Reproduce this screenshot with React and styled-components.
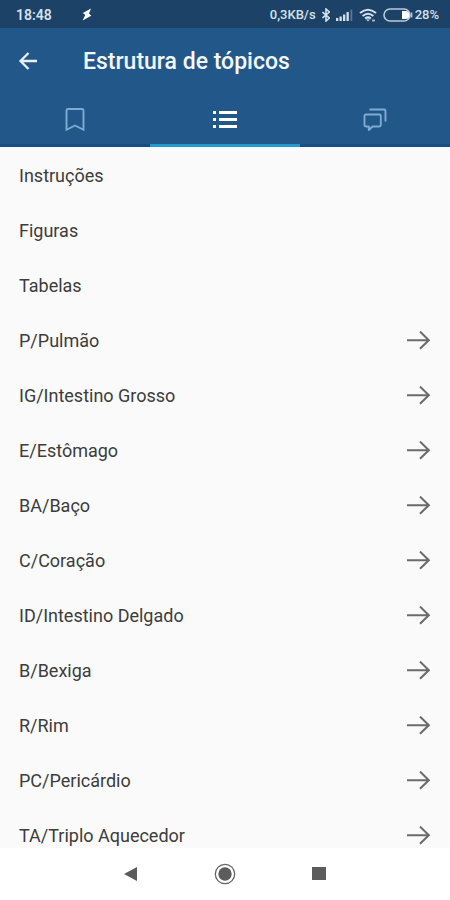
import styled, { createGlobalStyle } from "styled-components";

const topics = [
    { name: "Instruções" },
    { name: "Figuras" },
    { name: "Tabelas" },
    { name: "P/Pulmão", nested: true },
    { name: "IG/Intestino Grosso", nested: true },
    { name: "E/Estômago", nested: true },
    { name: "BA/Baço", nested: true },
    { name: "C/Coração", nested: true },
    { name: "ID/Intestino Delgado", nested: true },
    { name: "B/Bexiga", nested: true },
    { name: "R/Rim", nested: true },
    { name: "PC/Pericárdio", nested: true },
    { name: "TA/Triplo Aquecedor", nested: true },
];

function App() {
    return (
        <Page>
            <GlobalStyle />
            <StatusBar>
                <Clock>18:48</Clock>
                <BoltIcon />
                <StatusRight>
                    <span>0,3KB/s</span>
                    <BluetoothIcon />
                    <SignalIcon />
                    <WifiIcon />
                    <Battery>
                        <BatteryIcon />
                        <span>28%</span>
                    </Battery>
                </StatusRight>
            </StatusBar>

            <Header>
                <TitleBar>
                    <IconButton aria-label="Voltar">
                        <BackIcon />
                    </IconButton>
                    <Title>Estrutura de tópicos</Title>
                </TitleBar>
                <Tabs role="tablist">
                    <Tab role="tab" aria-label="Favoritos" aria-selected="false">
                        <BookmarkIcon />
                    </Tab>
                    <Tab role="tab" aria-label="Tópicos" aria-selected="true" $active>
                        <ListIcon />
                    </Tab>
                    <Tab role="tab" aria-label="Comentários" aria-selected="false">
                        <CommentsIcon />
                    </Tab>
                </Tabs>
            </Header>

            <TopicList>
                {topics.map((topic) => (
                    <li key={topic.name}>
                        <TopicButton>
                            <span>{topic.name}</span>
                            {topic.nested && <ArrowIcon />}
                        </TopicButton>
                    </li>
                ))}
            </TopicList>

            <NavBar>
                <IconButton aria-label="Anterior">
                    <svg width="22" height="22" viewBox="0 0 22 22">
                        <path d="M4 11 17 4V18Z" fill="#5c5c5c" />
                    </svg>
                </IconButton>
                <IconButton aria-label="Início">
                    <svg width="22" height="22" viewBox="0 0 22 22">
                        <circle cx="11" cy="11" r="9.7" fill="none" stroke="#666" strokeWidth="1.3" />
                        <circle cx="11" cy="11" r="6.7" fill="#5c5c5c" />
                    </svg>
                </IconButton>
                <IconButton aria-label="Recentes">
                    <svg width="22" height="22" viewBox="0 0 22 22">
                        <rect x="4" y="4" width="14" height="13" fill="#5c5c5c" />
                    </svg>
                </IconButton>
            </NavBar>
        </Page>
    );
}
export default App;

function BoltIcon() {
    return (
        <svg width="10" height="13" viewBox="0 0 10 13">
            <path d="M9 0.5 0.8 5 3.2 7 0.6 12.5 9.3 7.8 7 5.4Z" fill="#fff" />
        </svg>
    );
}

function BluetoothIcon() {
    return (
        <svg width="8" height="14" viewBox="0 0 8 14">
            <path
                d="M0.5 4 7.3 10 4 13V1L7.3 4 0.5 10"
                fill="none"
                stroke="#d5e0ec"
                strokeWidth="1.6"
            />
        </svg>
    );
}

function SignalIcon() {
    return (
        <svg width="17" height="12" viewBox="0 0 17 12">
            <path d="M0 9h2.3v3H0zM3.5 7.5h2.3V12H3.5zM7 5.5h2.3V12H7zM10.5 3h2.3v9h-2.3z" fill="#d5e0ec" />
            <path d="M14.5 0.5h1.8V12h-1.8z" fill="#587797" />
        </svg>
    );
}

function WifiIcon() {
    return (
        <svg width="18" height="14" viewBox="0 0 18 14">
            <g fill="none" stroke="#d5e0ec" strokeWidth="2.1">
                <path d="M1 5Q9-1.5 17 5" />
                <path d="M3.6 8Q9 3.5 14.4 8" />
                <path d="M6.2 10.6Q9 8.2 11.8 10.6" />
            </g>
            <path d="M7.2 11.5h3.6L9 13.5z" fill="#d5e0ec" />
            <path d="M13 11.5h3v2h-3z" fill="#9fb5cb" />
        </svg>
    );
}

function BatteryIcon() {
    return (
        <svg width="30" height="14" viewBox="0 0 30 14">
            <rect x="1" y="1" width="26" height="12" rx="6" fill="none" stroke="#b9cadb" strokeWidth="1.6" />
            <path d="M19 3h3.5a4 4 0 0 1 0 8H19z" fill="#fff" />
            <path d="M28.6 4.5v5" stroke="#b9cadb" strokeWidth="1.5" />
        </svg>
    );
}

function BackIcon() {
    return (
        <svg width="20" height="20" viewBox="0 0 20 20">
            <path d="M19 10H2.5M10.5 2 2.5 10l8 8" fill="none" stroke="#e9f1f8" strokeWidth="2.3" />
        </svg>
    );
}

function BookmarkIcon() {
    return (
        <svg width="24" height="24" viewBox="0 0 24 24">
            <path
                d="M3.5 2.5a1.5 1.5 0 0 1 1.5-1.5H19a1.5 1.5 0 0 1 1.5 1.5V21.8L12 17.5 3.5 21.8Z"
                fill="none"
                stroke="#7fabd3"
                strokeWidth="1.9"
            />
        </svg>
    );
}

function ListIcon() {
    return (
        <svg width="24" height="24" viewBox="0 0 24 24">
            <path
                d="M0 3h3v3H0zM0 10h3v3H0zM0 17h3v3H0zM6 3h18v3H6zM6 10h18v3H6zM6 17h18v3H6z"
                fill="#fff"
            />
        </svg>
    );
}

function CommentsIcon() {
    return (
        <svg width="24" height="24" viewBox="0 0 24 24">
            <g fill="none" stroke="#7fabd3" strokeWidth="1.9" strokeLinejoin="round">
                <path d="M3 6.5H16.3a1.5 1.5 0 0 1 1.5 1.5V17a1.5 1.5 0 0 1-1.5 1.5H9.5L5.8 22V18.5H3A1.5 1.5 0 0 1 1.5 17V8A1.5 1.5 0 0 1 3 6.5Z" />
                <path d="M6.5 1.5H21a1.5 1.5 0 0 1 1.5 1.5V13.5" />
            </g>
        </svg>
    );
}

function ArrowIcon() {
    return (
        <svg width="24" height="20" viewBox="0 0 24 20">
            <path d="M0 9.2H22M13 0.6 21.8 9.2l-8.8 8.6" fill="none" stroke="#6b6b6b" strokeWidth="2.1" />
        </svg>
    );
}

const GlobalStyle = createGlobalStyle`
    * {
        box-sizing: border-box;
    }
    body {
        margin: 0;
        font-family: Roboto, "Liberation Sans", sans-serif;
        background-color: #fafafa;
    }
    svg {
        display: block;
        flex-shrink: 0;
    }
`;

const Page = styled.div`
    display: flex;
    flex-direction: column;
    height: 100vh;
`;

const StatusBar = styled.div`
    display: flex;
    align-items: center;
    height: 28px;
    padding: 1px 11px 0 16px;
    font-size: 13px;
    font-weight: 500;
    color: #d5e0ec;
    background-color: #1c4268;
`;

const Clock = styled.div`
    margin-right: 30px;
    font-size: 14px;
    font-weight: 600;
`;

const StatusRight = styled.div`
    display: flex;
    align-items: center;
    gap: 6px;
    margin-left: auto;
`;

const Battery = styled.div`
    display: flex;
    align-items: center;
    gap: 2px;
`;

const Header = styled.header`
    background-color: #22578a;
`;

const TitleBar = styled.div`
    display: flex;
    align-items: center;
    gap: 45px;
    height: 64px;
    padding: 2px 18px 0;
`;

const Title = styled.h1`
    margin: 0;
    font-size: 23px;
    font-weight: 500;
    color: #f4f8fc;
`;

const IconButton = styled.button`
    padding: 0;
    border: none;
    background-color: transparent;
`;

const Tabs = styled.div`
    display: grid;
    grid-template-columns: repeat(3, 1fr);
`;

const Tab = styled.button`
    display: flex;
    align-items: center;
    justify-content: center;
    height: 55px;
    padding: 3px 0 0;
    border: none;
    border-bottom: 3px solid ${(props) => (props.$active ? "#2399d0" : "#174e83")};
    background-color: transparent;
`;

const TopicList = styled.ul`
    flex: 1;
    min-height: 0;
    margin: 0;
    padding: 1px 0 0;
    list-style: none;
    overflow-y: auto;
    scrollbar-width: none;
`;

const TopicButton = styled.button`
    display: flex;
    align-items: center;
    justify-content: space-between;
    width: 100%;
    height: 55px;
    padding: 0 19px;
    border: none;
    font-family: inherit;
    font-size: 18px;
    text-align: left;
    color: #3c3c3c;
    background-color: transparent;
`;

const NavBar = styled.nav`
    display: flex;
    align-items: center;
    justify-content: center;
    gap: 72px;
    height: 52px;
    background-color: #fff;
`;
